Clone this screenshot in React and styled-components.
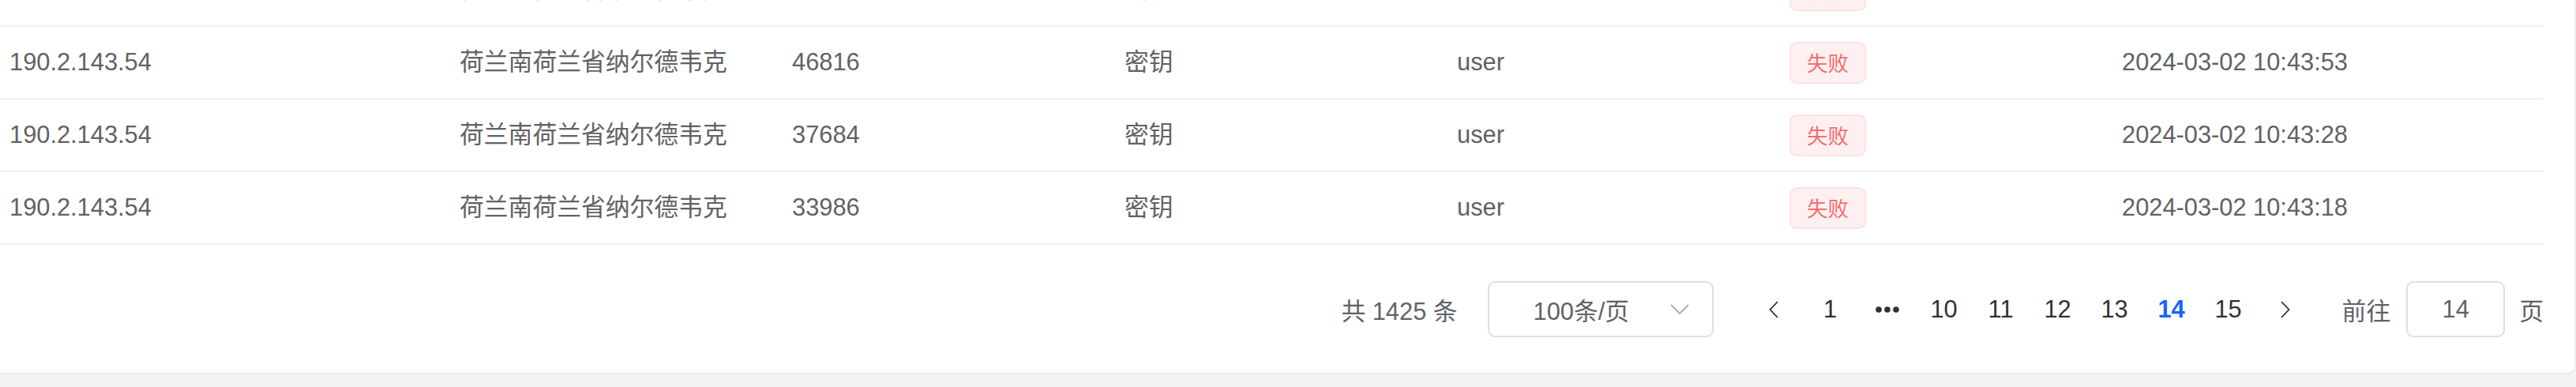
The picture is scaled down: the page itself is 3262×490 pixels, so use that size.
import React from "react";
import styled, { createGlobalStyle } from "styled-components";

const GlobalStyle = createGlobalStyle`
  html, body {
    margin: 0;
    padding: 0;
    background: #f2f3f5;
  }
  body {
    font-family: "Liberation Sans", Arial, "Noto Sans CJK SC", sans-serif;
  }
  * { box-sizing: border-box; }
`;

const Page = styled.div`
  width: 3262px;
  height: 490px;
  overflow: hidden;
  background: #f2f3f5;
`;

const Card = styled.div`
  width: 3260px;
  background: #ffffff;
  padding-right: 39px;
  border-radius: 0 0 9px 0;
  box-shadow: 0 1px 3px rgba(0, 0, 0, 0.06);
`;

const TableViewport = styled.div`
  height: 310px;
  overflow: hidden;
  display: flex;
  flex-direction: column;
  justify-content: flex-end;
`;

const Row = styled.div`
  flex: 0 0 auto;
  display: grid;
  grid-template-columns: 570px 421px 421px 421px 421px 421px 1fr;
  align-items: center;
  height: 92px;
  padding-left: 12px;
  border-bottom: 2px solid #ebeef5;
`;

const Cell = styled.div`
  font-family: "Liberation Sans", Arial, "Noto Sans CJK SC", sans-serif;
  font-size: 30.8px;
  line-height: 44px;
  color: #606266;
  white-space: nowrap;
`;

const Tag = styled.span`
  display: inline-flex;
  align-items: center;
  height: 53px;
  padding: 0 20px;
  border: 2px solid #fde2e2;
  border-radius: 9px;
  background: #fef0f0;
  color: #f56c6c;
  font-family: "Noto Sans CJK SC", sans-serif;
  font-size: 26.4px;
  line-height: 1;
`;

const Pagination = styled.div`
  display: flex;
  justify-content: flex-end;
  align-items: center;
  padding: 46px 0 45px;
  font-family: "Liberation Sans", Arial, "Noto Sans CJK SC", sans-serif;
  font-size: 30.8px;
  color: #606266;
`;

const Total = styled.span`
  white-space: nowrap;
  margin-right: 38px;
`;

const SizeSelect = styled.div`
  display: flex;
  align-items: center;
  justify-content: space-between;
  width: 286px;
  height: 71px;
  padding: 0 29px 0 56px;
  border: 2px solid #dcdfe6;
  border-radius: 9px;
  color: #606266;
  white-space: nowrap;
  margin-right: 40px;
`;

const Pager = styled.div`
  display: flex;
  align-items: center;
  margin-right: 36px;
`;

const PagerItem = styled.span`
  display: flex;
  align-items: center;
  justify-content: center;
  width: 72px;
  height: 71px;
  color: ${(p) => (p.$active ? "#1664ff" : "#303133")};
  font-weight: ${(p) => (p.$active ? 700 : 400)};
`;

const Jumper = styled.div`
  display: flex;
  align-items: center;
  color: #606266;
  white-space: nowrap;
`;

const JumpInput = styled.div`
  display: flex;
  align-items: center;
  justify-content: center;
  width: 125px;
  height: 71px;
  margin: 0 18px 0 20px;
  border: 2px solid #dcdfe6;
  border-radius: 9px;
  color: #606266;
`;

const ChevronDown = () => (
  <svg width="24" height="13" viewBox="0 0 24 13" fill="none">
    <path d="M1 1 L12 12 L23 1" stroke="#a8abb2" strokeWidth="1.8" />
  </svg>
);

const ChevronLeft = () => (
  <svg width="12" height="22" viewBox="0 0 12 22" fill="none">
    <path d="M11 1 L1.5 11 L11 21" stroke="#303133" strokeWidth="1.8" />
  </svg>
);

const ChevronRight = () => (
  <svg width="12" height="22" viewBox="0 0 12 22" fill="none">
    <path d="M1 1 L10.5 11 L1 21" stroke="#303133" strokeWidth="1.8" />
  </svg>
);

const Dots = () => (
  <svg width="30" height="10" viewBox="0 0 30 10">
    <circle cx="4" cy="5" r="3.8" fill="#303133" />
    <circle cx="15" cy="5" r="3.8" fill="#303133" />
    <circle cx="26" cy="5" r="3.8" fill="#303133" />
  </svg>
);

const rows = [
  { ip: "190.2.143.54", loc: "荷兰南荷兰省纳尔德韦克", port: "51220", method: "密钥", user: "user", time: "2024-03-02 10:44:02" },
  { ip: "190.2.143.54", loc: "荷兰南荷兰省纳尔德韦克", port: "46816", method: "密钥", user: "user", time: "2024-03-02 10:43:53" },
  { ip: "190.2.143.54", loc: "荷兰南荷兰省纳尔德韦克", port: "37684", method: "密钥", user: "user", time: "2024-03-02 10:43:28" },
  { ip: "190.2.143.54", loc: "荷兰南荷兰省纳尔德韦克", port: "33986", method: "密钥", user: "user", time: "2024-03-02 10:43:18" },
];

const pages = ["10", "11", "12", "13", "14", "15"];

export default function App() {
  return (
    <>
      <GlobalStyle />
      <Page>
        <Card>
          <TableViewport>
            {rows.map((r, i) => (
              <Row key={i}>
                <Cell>{r.ip}</Cell>
                <Cell>{r.loc}</Cell>
                <Cell>{r.port}</Cell>
                <Cell>{r.method}</Cell>
                <Cell>{r.user}</Cell>
                <Cell>
                  <Tag>失败</Tag>
                </Cell>
                <Cell>{r.time}</Cell>
              </Row>
            ))}
          </TableViewport>
          <Pagination>
            <Total>共 1425 条</Total>
            <SizeSelect>
              <span>100条/页</span>
              <ChevronDown />
            </SizeSelect>
            <Pager>
              <PagerItem>
                <ChevronLeft />
              </PagerItem>
              <PagerItem>1</PagerItem>
              <PagerItem>
                <Dots />
              </PagerItem>
              {pages.map((p) => (
                <PagerItem key={p} $active={p === "14"}>
                  {p}
                </PagerItem>
              ))}
              <PagerItem>
                <ChevronRight />
              </PagerItem>
            </Pager>
            <Jumper>
              <span>前往</span>
              <JumpInput>14</JumpInput>
              <span>页</span>
            </Jumper>
          </Pagination>
        </Card>
      </Page>
    </>
  );
}
